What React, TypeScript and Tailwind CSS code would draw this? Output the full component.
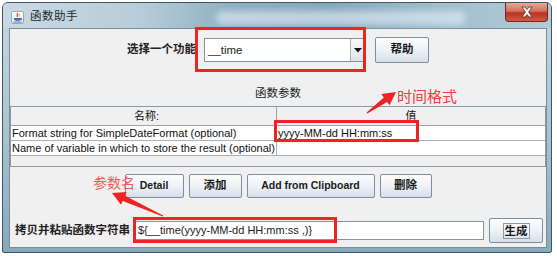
import React from "react";

const arrowPoints = (tx: number, ty: number, px: number, py: number) => {
  const head = 13;
  const hw = 7;
  const dx = px - tx;
  const dy = py - ty;
  const len = Math.sqrt(dx * dx + dy * dy);
  const ux = dx / len;
  const uy = dy / len;
  const nx = -uy;
  const ny = ux;
  const bx = px - ux * head;
  const by = py - uy * head;
  const pts = [
    [tx + nx * 0.6, ty + ny * 0.6],
    [bx + nx * 2.8, by + ny * 2.8],
    [bx + nx * hw, by + ny * hw],
    [px, py],
    [bx - nx * hw, by - ny * hw],
    [bx - nx * 2.8, by - ny * 2.8],
    [tx - nx * 0.6, ty - ny * 0.6],
  ];
  return pts.map((p) => `${p[0].toFixed(1)},${p[1].toFixed(1)}`).join(" ");
};

const btn =
  "flex items-center justify-center border border-[#7e8e9c] rounded-[2px] bg-linear-to-b from-[#fbfcfd] via-[#eef2f6] to-[#d5dfe9] text-[10.5px] font-bold text-[#1b1b1b]";

const App = () => {
  return (
    <div className="w-[557px] h-[256px] bg-white relative overflow-hidden font-['Liberation_Sans','Noto_Sans_CJK_SC',sans-serif]">
      {/* window frame */}
      <div className="ml-[2px] mt-[2px] w-[550px] h-[251px] border border-[#3f5666] rounded-t-[6px] rounded-b-[2px] bg-[linear-gradient(180deg,#c6d7e0_0%,#adc6d3_45%,#86a9bc_100%)] flex flex-col">
        {/* title bar */}
        <div className="h-[25px] flex items-center relative bg-[linear-gradient(90deg,#c9d9e2_0%,#b7cdd9_25%,#8eafc1_42%,#86a8bb_60%,#a3bfce_82%,#b2cbd7_100%)] rounded-t-[5px]">
          <div className="ml-[8px] w-[13px] h-[13px] mt-[3px] rounded-[2px] bg-linear-to-b from-white to-[#dfe6ee] border border-[#9aa9b6] flex items-center justify-center">
            <svg width="11" height="11" viewBox="0 0 11 11">
              <path d="M5 1 C6.5 2.5 4 3.5 5.5 5" stroke="#e0442a" strokeWidth="1.2" fill="none" />
              <path d="M7 1.5 C7.8 2.6 6.6 3.4 7.2 4.4" stroke="#e07a2a" strokeWidth="0.9" fill="none" />
              <path d="M2 6 H9 V7.5 C9 9.2 2 9.2 2 7.5 Z" fill="#3d6fb0" />
              <path d="M9 6.3 C10.6 6.3 10.6 8 9 8" stroke="#3d6fb0" strokeWidth="0.8" fill="none" />
              <rect x="1.5" y="9.6" width="8" height="0.9" fill="#3d6fb0" />
            </svg>
          </div>
          <span className="ml-[6px] mt-[3px] text-[11.5px] text-[#1c2a33] tracking-[0.5px]">函数助手</span>
          <div className="ml-[138px] mt-[4px] w-[250px] h-[14px] rounded-full bg-[#e6eef8]/60 blur-[3px]" />
          <div className="ml-auto mr-[3px] self-start w-[43px] h-[19px] rounded-b-[4px] border border-t-0 border-[#6e2a22] bg-[linear-gradient(180deg,#e9a898_0%,#d2705d_45%,#b8321e_55%,#cf5c44_100%)] flex items-center justify-center">
            <svg width="14" height="12" viewBox="0 0 14 12">
              <path
                d="M2 1 L5 1 L7 3.6 L9 1 L12 1 L8.6 6 L12 11 L9 11 L7 8.4 L5 11 L2 11 L5.4 6 Z"
                fill="#ffffff"
                stroke="#5a2a24"
                strokeWidth="0.8"
              />
            </svg>
          </div>
        </div>

        {/* content */}
        <div className="flex-1 flex pl-[6px] pr-[4px] pb-[4px]">
          <div className="flex-1 border border-[#7b8c99] bg-[#f0f0f0] flex flex-col pt-[8px]">
            {/* row 1 */}
            <div className="h-[26px] flex items-center justify-center">
              <span className="text-[11.5px] font-bold text-[#222]">选择一个功能</span>
              <div className="ml-[8px] w-[162px] h-[24px] border border-[#8393a1] bg-white flex">
                <span className="flex-1 pl-[3px] text-[11.5px] leading-[22px] text-[#222]">__time</span>
                <div className="w-[15px] border-l border-[#a7b4bf] bg-linear-to-b from-[#f7f9fb] to-[#dce4ec] flex items-center justify-center">
                  <svg width="8" height="5" viewBox="0 0 8 5">
                    <path d="M0 0 H8 L4 4.5 Z" fill="#111" />
                  </svg>
                </div>
              </div>
              <div className={`${btn} ml-[9px] w-[54px] h-[26px] text-[11.5px]`}>帮助</div>
            </div>

            {/* section label */}
            <div className="mt-[23px] h-[14px] text-center text-[11.5px] leading-[14px] text-[#222]">函数参数</div>

            {/* table */}
            <div className="mt-[6px] h-[61px] border border-[#8c9aa5] bg-[#f0f0f0] text-[11px] text-[#111]">
              <div className="grid grid-cols-[266px_1fr] h-[19px] border-b border-[#9aa5ae]">
                <div className="border-r border-[#9aa5ae] text-center leading-[18px] pl-[6px]">名称:</div>
                <div className="text-center leading-[18px]">值</div>
              </div>
              <div className="grid grid-cols-[266px_1fr] h-[15px] border-b border-[#a8b0b8] bg-white">
                <div className="border-r border-[#a8b0b8] pl-[1px] leading-[14px] whitespace-nowrap">
                  Format string for SimpleDateFormat (optional)
                </div>
                <div className="pl-[1px] leading-[14px] whitespace-nowrap">yyyy-MM-dd HH:mm:ss</div>
              </div>
              <div className="grid grid-cols-[266px_1fr] h-[15px] border-b border-[#a8b0b8] bg-white">
                <div className="border-r border-[#a8b0b8] pl-[1px] leading-[14px] whitespace-nowrap">
                  Name of variable in which to store the result (optional)
                </div>
                <div />
              </div>
            </div>

            {/* buttons row */}
            <div className="mt-[7px] h-[24px] flex justify-center gap-[5px]">
              <div className={`${btn} w-[59px] h-[24px]`}>Detail</div>
              <div className={`${btn} w-[53px] h-[24px] text-[11.5px]`}>添加</div>
              <div className={`${btn} w-[128px] h-[24px]`}>Add from Clipboard</div>
              <div className={`${btn} w-[52px] h-[24px] text-[11.5px]`}>删除</div>
            </div>

            {/* bottom row */}
            <div className="mt-[20px] h-[25px] flex items-center gap-[5px] pl-[5px] pr-[3px]">
              <span className="text-[11.5px] font-bold text-[#222] whitespace-nowrap">拷贝并粘贴函数字符串</span>
              <div className="flex-1 h-[19px] border border-[#8393a1] bg-white pl-[2px] text-[11px] leading-[17px] text-[#222] whitespace-nowrap">
                {"${__time(yyyy-MM-dd HH:mm:ss ,)}"}
              </div>
              <div className={`${btn} w-[54px] h-[25px] text-[11.5px]`}>
                <span className="border border-[#8a9aa8] px-[1px] leading-[14px]">生成</span>
              </div>
            </div>
          </div>
        </div>
      </div>

      {/* annotations */}
      <div className="absolute left-[195px] top-[27px] w-[171px] h-[45px] border-[3px] border-[#ee2424] pointer-events-none" />
      <div className="absolute left-[274px] top-[120px] w-[145px] h-[22px] border-[3px] border-[#ee2424] pointer-events-none" />
      <div className="absolute left-[133px] top-[217px] w-[204px] h-[26px] border-[3px] border-[#ee2424] pointer-events-none" />
      <span className="absolute left-[397px] top-[88px] text-[15px] leading-[18px] text-[#f03c3c] whitespace-nowrap">
        时间格式
      </span>
      <span className="absolute left-[93px] top-[175px] text-[14px] leading-[17px] text-[#f25a5a] whitespace-nowrap">
        参数名
      </span>
      <svg className="absolute left-0 top-0 pointer-events-none" width="557" height="256">
        <polygon points={arrowPoints(367, 113, 396, 92)} fill="#ee2424" />
        <polygon points={arrowPoints(163, 216, 112, 193)} fill="#ee2424" />
      </svg>
    </div>
  );
};

export default App;
